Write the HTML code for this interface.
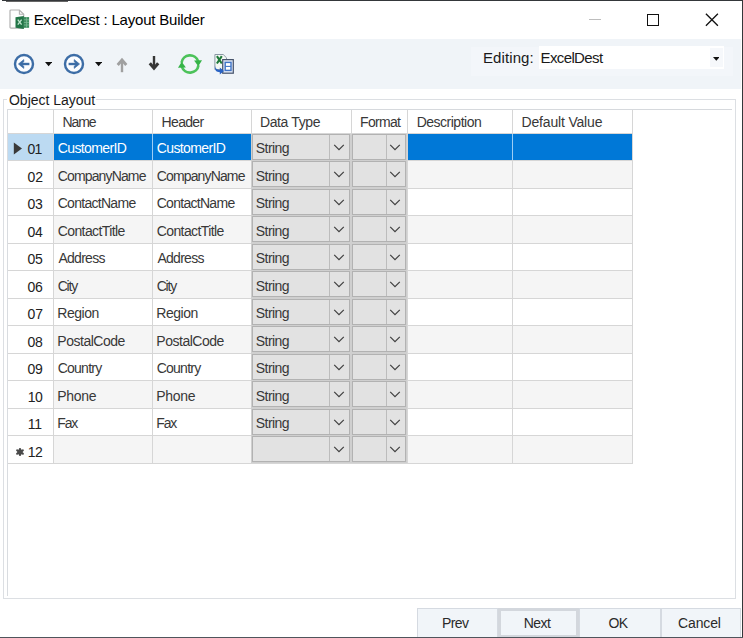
<!DOCTYPE html>
<html><head><meta charset="utf-8"><title>ExcelDest : Layout Builder</title>
<style>
html,body{margin:0;padding:0;}
body{width:743px;height:638px;overflow:hidden;background:#fff;position:relative;font-family:"Liberation Sans",sans-serif;font-size:13px;color:#1a1a1a;}
.a{position:absolute;}
.t{position:absolute;white-space:pre;}
.hl{position:absolute;height:1px;background:#d6d6d6;}
.vl{position:absolute;width:1px;background:#d6d6d6;}
.cb{position:absolute;background:#e2e2e2;border:1.2px solid #b2b2b2;box-sizing:border-box;}
.cb i{position:absolute;top:0;bottom:0;width:1.3px;background:#bcbcbc;}
.btn{position:absolute;box-sizing:border-box;background:#f1f5f9;border:1px solid #d5dae1;}
</style></head><body>

<div class="a" style="z-index:5;left:2px;top:0;width:741px;height:1px;background:#34373a"></div>
<div class="a" style="z-index:5;left:742px;top:0;width:1px;height:638px;background:#34373a"></div>
<div class="a" style="z-index:5;left:0;top:637px;width:743px;height:1px;background:#50555c"></div>
<div class="a" style="left:6px;top:0;width:62px;height:1.5px;background:#333;opacity:.75"></div>
<svg class="a" style="left:9px;top:9px" width="22" height="22" viewBox="0 0 22 22">
<path d="M2 1h8.4l4.3 4.3v12.8q0 1 -1 1h-11.7q-1 0 -1 -1v-16.1q0 -1 1 -1z" fill="#fdfdfd" stroke="#b2b2b2" stroke-width="1.2"/>
<path d="M10.4 1v4.3h4.3" fill="none" stroke="#b2b2b2" stroke-width="1.1"/>
<path d="M6.5 8.2L14.9 7v12.9L6.5 18.7z" fill="#227547"/>
<rect x="14.9" y="8.1" width="5.2" height="10.7" fill="#3b8c5d"/>
<path d="M14.9 10.8h5.2M14.9 13.4h5.2M14.9 16h5.2M17.6 8.1v10.7" stroke="#7fbb98" stroke-width="0.8"/>
<path d="M8.8 10.7l3.8 5M12.6 10.7l-3.8 5" stroke="#bfe3cc" stroke-width="1.4"/>
</svg>
<div class="t" style="left:33.80px;top:9.40px;font-size:15px;line-height:21px;height:21px;letter-spacing:-0.200px;color:#000;">ExcelDest : Layout Builder</div>
<div class="a" style="left:589.3px;top:19px;width:12px;height:1px;background:#bdbdbd"></div>
<div class="a" style="left:646.8px;top:13.6px;width:12.2px;height:12.2px;box-sizing:border-box;border:1.3px solid #111"></div>
<svg class="a" style="left:704px;top:12px" width="16" height="16" viewBox="0 0 16 16"><path d="M1.9 1.7L13.9 13.7M13.9 1.7L1.9 13.7" stroke="#111" stroke-width="1.3" fill="none"/></svg>
<div class="a" style="left:0;top:38.8px;width:740.6px;height:50px;background:#f0f4f8"></div>
<div class="a" style="left:471px;top:46.5px;width:262px;height:29px;background:#f3f6fa"></div>
<svg class="a" style="left:11.7px;top:52.0px" width="24" height="24" viewBox="-12 -12 24 24"><circle r="9" fill="#fcfdff" stroke="#3d6da6" stroke-width="2.4"/><path d="M5.4 0H-3.6" fill="none" stroke="#3d6da6" stroke-width="2.4"/><path d="M-0.2 -4.4L-5.6 0L-0.2 4.4L-0.2 2.2L-2.6 0L-0.2 -2.2Z" fill="#3d6da6" stroke="#3d6da6" stroke-width="0.6"/></svg>
<svg class="a" style="left:62.400000000000006px;top:52.0px" width="24" height="24" viewBox="-12 -12 24 24"><circle r="9" fill="#fcfdff" stroke="#3d6da6" stroke-width="2.4"/><path d="M-5.4 0H3.6" fill="none" stroke="#3d6da6" stroke-width="2.4"/><path d="M0.2 -4.4L5.6 0L0.2 4.4L0.2 2.2L2.6 0L0.2 -2.2Z" fill="#3d6da6" stroke="#3d6da6" stroke-width="0.6"/></svg>
<svg class="a" style="left:44.9px;top:62.449999999999996px" width="7.2" height="4.3" viewBox="0 0 7.2 4.3"><path d="M0 0H7.2L3.6 4.3Z" fill="#111"/></svg>
<svg class="a" style="left:94.9px;top:62.449999999999996px" width="7.2" height="4.3" viewBox="0 0 7.2 4.3"><path d="M0 0H7.2L3.6 4.3Z" fill="#111"/></svg>
<svg class="a" style="left:113.5px;top:56.7px" width="16" height="16" viewBox="0 0 16 16"><path d="M8 15.2V3.4" fill="none" stroke="#a0a0a0" stroke-width="2.4"/><path d="M3.7 8L8 3L12.3 8" fill="none" stroke="#a0a0a0" stroke-width="2.9"/></svg>
<svg class="a" style="left:146px;top:55.1px" width="16" height="16" viewBox="0 0 16 16"><path d="M8 1V12.8" fill="none" stroke="#363636" stroke-width="2.4"/><path d="M3.8 8.2L8 13.2L12.2 8.2" fill="none" stroke="#363636" stroke-width="3"/></svg>
<svg class="a" style="left:177.9px;top:51.7px" width="24" height="24" viewBox="-12 -12 24 24">
<path d="M-8.5 -1.2A8.6 8.6 0 0 1 8.2 -2.6" fill="none" stroke="#4cc25a" stroke-width="2.7"/>
<path d="M8.5 1.2A8.6 8.6 0 0 1 -8.2 2.6" fill="none" stroke="#4cc25a" stroke-width="2.7"/>
<path d="M4.1 -3.4L12 -3.8L8.3 2.2Z" fill="#35b347"/>
<path d="M-4.1 3.4L-12 3.8L-8.3 -2.2Z" fill="#35b347"/>
</svg>
<svg class="a" style="left:214px;top:54px" width="22" height="21" viewBox="0 0 22 21">
<path d="M0.9 0.5h8.3l3.3 3.3v11.7h-11.6z" fill="#f4f8f4" stroke="#8a97a5" stroke-width="1"/>
<path d="M2.9 2.1l4.9 7.4M7.8 2.1l-4.9 7.4" stroke="#1f7a3a" stroke-width="2.1"/>
<rect x="8.7" y="5.6" width="10.6" height="13.6" fill="#dde6f5" stroke="#46536b" stroke-width="1.2"/>
<rect x="11.2" y="8.4" width="5.8" height="8" fill="#fff" stroke="#3f74c7" stroke-width="1.4"/>
<path d="M11.2 12.4h5.8" stroke="#3f74c7" stroke-width="1.1"/>
<path d="M0.9 11.5q0.4 4.4 4.9 4.4v-2.3l4.2 3.5l-4.2 3.3v-2.2q-5.6 0 -4.9 -6.7z" fill="#2a63c4"/>
</svg>
<div class="t" style="left:483.00px;top:46.90px;font-size:15px;line-height:21px;height:21px;letter-spacing:0.100px;color:#1a1a1a;">Editing:</div>
<div class="a" style="left:539px;top:46.4px;width:185.3px;height:22.2px;background:#fff"></div>
<div class="a" style="left:709.5px;top:48.4px;width:13.5px;height:18.4px;background:#f6f8fb"></div>
<div class="t" style="left:540.50px;top:46.90px;font-size:15px;line-height:21px;height:21px;letter-spacing:-0.612px;color:#1a1a1a;">ExcelDest</div>
<svg class="a" style="left:712.7px;top:56.800000000000004px" width="6.6" height="3.8" viewBox="0 0 6.6 3.8"><path d="M0 0H6.6L3.3 3.8Z" fill="#111"/></svg>
<div class="a" style="left:3.3px;top:99.2px;width:732.4px;height:499.8px;box-sizing:border-box;border:1px solid #dcdfe3;box-shadow:inset 1px 1px 0 #fff, 1px 1px 0 #fff"></div>
<div class="a" style="left:7px;top:96px;width:89px;height:8px;background:#fff"></div>
<div class="t" style="left:9.00px;top:90.35px;font-size:14px;line-height:20px;height:20px;letter-spacing:-0.017px;color:#1a1a1a;">Object Layout</div>
<div class="a" style="left:7.0px;top:109.0px;width:725px;height:1.2px;background:#d6d9dd"></div>
<div class="a" style="left:6.6px;top:109.0px;width:1.5px;height:486.6px;background:#d9dce0"></div>
<div class="a" style="left:8.0px;top:133.5px;width:45.0px;height:26.7px;background:#bcdaf2"></div>
<div class="a" style="left:53px;top:133.5px;width:198.3px;height:26.7px;background:#0078d7"></div>
<div class="a" style="left:407.2px;top:133.5px;width:225.3px;height:26.7px;background:#0078d7"></div>
<div class="a" style="left:53px;top:161.0px;width:579.5px;height:27.5px;background:#f5f5f5"></div>
<div class="a" style="left:53px;top:216.0px;width:579.5px;height:27.5px;background:#f5f5f5"></div>
<div class="a" style="left:53px;top:271.0px;width:579.5px;height:27.5px;background:#f5f5f5"></div>
<div class="a" style="left:53px;top:326.0px;width:579.5px;height:27.5px;background:#f5f5f5"></div>
<div class="a" style="left:53px;top:381.0px;width:579.5px;height:27.5px;background:#f5f5f5"></div>
<div class="a" style="left:53px;top:436.0px;width:579.5px;height:27.5px;background:#f5f5f5"></div>
<div class="hl" style="left:8.0px;top:132.7px;width:625.0px"></div>
<div class="hl" style="left:8.0px;top:160.2px;width:625.0px"></div>
<div class="hl" style="left:8.0px;top:187.7px;width:625.0px"></div>
<div class="hl" style="left:8.0px;top:215.2px;width:625.0px"></div>
<div class="hl" style="left:8.0px;top:242.7px;width:625.0px"></div>
<div class="hl" style="left:8.0px;top:270.2px;width:625.0px"></div>
<div class="hl" style="left:8.0px;top:297.7px;width:625.0px"></div>
<div class="hl" style="left:8.0px;top:325.2px;width:625.0px"></div>
<div class="hl" style="left:8.0px;top:352.7px;width:625.0px"></div>
<div class="hl" style="left:8.0px;top:380.2px;width:625.0px"></div>
<div class="hl" style="left:8.0px;top:407.7px;width:625.0px"></div>
<div class="hl" style="left:8.0px;top:435.2px;width:625.0px"></div>
<div class="hl" style="left:8.0px;top:462.7px;width:625.0px"></div>
<div class="vl" style="left:52.5px;top:110.0px;height:353.5px"></div>
<div class="vl" style="left:151.8px;top:110.0px;height:353.5px"></div>
<div class="vl" style="left:250.8px;top:110.0px;height:353.5px"></div>
<div class="vl" style="left:350.8px;top:110.0px;height:353.5px"></div>
<div class="vl" style="left:406.7px;top:110.0px;height:353.5px"></div>
<div class="vl" style="left:511.9px;top:110.0px;height:353.5px"></div>
<div class="vl" style="left:632.0px;top:110.0px;height:353.5px"></div>
<div class="a" style="left:251.3px;top:133.5px;width:155.29999999999998px;height:329.4px;background:#cfcfcf"></div>
<div class="a" style="left:151.8px;top:133.5px;width:1px;height:26.7px;background:#9ccdf5"></div>
<div class="a" style="left:511.9px;top:133.5px;width:1px;height:26.7px;background:#9ccdf5"></div>
<div class="t" style="left:62.60px;top:111.65px;font-size:14px;line-height:20px;height:20px;letter-spacing:-1.167px;color:#383838;">Name</div>
<div class="t" style="left:161.60px;top:111.65px;font-size:14px;line-height:20px;height:20px;letter-spacing:-0.680px;color:#383838;">Header</div>
<div class="t" style="left:259.90px;top:111.65px;font-size:14px;line-height:20px;height:20px;letter-spacing:-0.362px;color:#383838;">Data Type</div>
<div class="t" style="left:360.10px;top:111.65px;font-size:14px;line-height:20px;height:20px;letter-spacing:-0.700px;color:#383838;">Format</div>
<div class="t" style="left:416.70px;top:111.65px;font-size:14px;line-height:20px;height:20px;letter-spacing:-0.500px;color:#383838;">Description</div>
<div class="t" style="left:521.60px;top:111.65px;font-size:14px;line-height:20px;height:20px;letter-spacing:-0.183px;color:#383838;">Default Value</div>
<div class="t" style="left:27.50px;top:139.15px;font-size:14px;line-height:20px;height:20px;letter-spacing:-0.900px;color:#222;">01</div>
<div class="t" style="left:57.70px;top:138.35px;font-size:14px;line-height:20px;height:20px;letter-spacing:-0.600px;color:#fff;">CustomerID</div>
<div class="t" style="left:156.70px;top:138.35px;font-size:14px;line-height:20px;height:20px;letter-spacing:-0.600px;color:#fff;">CustomerID</div>
<div class="cb" style="left:251.5px;top:133.8px;width:98.4px;height:25.9px"><i style="right:18.6px"></i></div>
<div class="cb" style="left:352.1px;top:133.8px;width:54.299999999999976px;height:25.9px"><i style="right:18.6px"></i></div>
<svg class="a" style="left:333.40000000000003px;top:142.5px" width="12" height="9" viewBox="0 0 12 9"><path d="M1.2 1.8L6 6.6L10.8 1.8" fill="none" stroke="#404040" stroke-width="1.2"/></svg>
<svg class="a" style="left:389.3px;top:142.5px" width="12" height="9" viewBox="0 0 12 9"><path d="M1.2 1.8L6 6.6L10.8 1.8" fill="none" stroke="#404040" stroke-width="1.2"/></svg>
<div class="t" style="left:255.80px;top:138.35px;font-size:14px;line-height:20px;height:20px;letter-spacing:-0.560px;color:#383838;">String</div>
<div class="t" style="left:27.50px;top:166.65px;font-size:14px;line-height:20px;height:20px;letter-spacing:-0.100px;color:#222;">02</div>
<div class="t" style="left:57.70px;top:165.85px;font-size:14px;line-height:20px;height:20px;letter-spacing:-0.850px;color:#383838;">CompanyName</div>
<div class="t" style="left:156.70px;top:165.85px;font-size:14px;line-height:20px;height:20px;letter-spacing:-0.850px;color:#383838;">CompanyName</div>
<div class="cb" style="left:251.5px;top:161.3px;width:98.4px;height:25.9px"><i style="right:18.6px"></i></div>
<div class="cb" style="left:352.1px;top:161.3px;width:54.299999999999976px;height:25.9px"><i style="right:18.6px"></i></div>
<svg class="a" style="left:333.40000000000003px;top:170.0px" width="12" height="9" viewBox="0 0 12 9"><path d="M1.2 1.8L6 6.6L10.8 1.8" fill="none" stroke="#404040" stroke-width="1.2"/></svg>
<svg class="a" style="left:389.3px;top:170.0px" width="12" height="9" viewBox="0 0 12 9"><path d="M1.2 1.8L6 6.6L10.8 1.8" fill="none" stroke="#404040" stroke-width="1.2"/></svg>
<div class="t" style="left:255.80px;top:165.85px;font-size:14px;line-height:20px;height:20px;letter-spacing:-0.560px;color:#383838;">String</div>
<div class="t" style="left:27.50px;top:194.15px;font-size:14px;line-height:20px;height:20px;letter-spacing:-0.200px;color:#222;">03</div>
<div class="t" style="left:57.70px;top:193.35px;font-size:14px;line-height:20px;height:20px;letter-spacing:-0.710px;color:#383838;">ContactName</div>
<div class="t" style="left:156.70px;top:193.35px;font-size:14px;line-height:20px;height:20px;letter-spacing:-0.710px;color:#383838;">ContactName</div>
<div class="cb" style="left:251.5px;top:188.8px;width:98.4px;height:25.9px"><i style="right:18.6px"></i></div>
<div class="cb" style="left:352.1px;top:188.8px;width:54.299999999999976px;height:25.9px"><i style="right:18.6px"></i></div>
<svg class="a" style="left:333.40000000000003px;top:197.5px" width="12" height="9" viewBox="0 0 12 9"><path d="M1.2 1.8L6 6.6L10.8 1.8" fill="none" stroke="#404040" stroke-width="1.2"/></svg>
<svg class="a" style="left:389.3px;top:197.5px" width="12" height="9" viewBox="0 0 12 9"><path d="M1.2 1.8L6 6.6L10.8 1.8" fill="none" stroke="#404040" stroke-width="1.2"/></svg>
<div class="t" style="left:255.80px;top:193.35px;font-size:14px;line-height:20px;height:20px;letter-spacing:-0.560px;color:#383838;">String</div>
<div class="t" style="left:27.50px;top:221.65px;font-size:14px;line-height:20px;height:20px;letter-spacing:-0.400px;color:#222;">04</div>
<div class="t" style="left:57.70px;top:220.85px;font-size:14px;line-height:20px;height:20px;letter-spacing:-0.591px;color:#383838;">ContactTitle</div>
<div class="t" style="left:156.70px;top:220.85px;font-size:14px;line-height:20px;height:20px;letter-spacing:-0.591px;color:#383838;">ContactTitle</div>
<div class="cb" style="left:251.5px;top:216.3px;width:98.4px;height:25.9px"><i style="right:18.6px"></i></div>
<div class="cb" style="left:352.1px;top:216.3px;width:54.299999999999976px;height:25.9px"><i style="right:18.6px"></i></div>
<svg class="a" style="left:333.40000000000003px;top:225.0px" width="12" height="9" viewBox="0 0 12 9"><path d="M1.2 1.8L6 6.6L10.8 1.8" fill="none" stroke="#404040" stroke-width="1.2"/></svg>
<svg class="a" style="left:389.3px;top:225.0px" width="12" height="9" viewBox="0 0 12 9"><path d="M1.2 1.8L6 6.6L10.8 1.8" fill="none" stroke="#404040" stroke-width="1.2"/></svg>
<div class="t" style="left:255.80px;top:220.85px;font-size:14px;line-height:20px;height:20px;letter-spacing:-0.560px;color:#383838;">String</div>
<div class="t" style="left:27.50px;top:249.15px;font-size:14px;line-height:20px;height:20px;letter-spacing:-0.200px;color:#222;">05</div>
<div class="t" style="left:58.40px;top:248.35px;font-size:14px;line-height:20px;height:20px;letter-spacing:-0.717px;color:#383838;">Address</div>
<div class="t" style="left:157.40px;top:248.35px;font-size:14px;line-height:20px;height:20px;letter-spacing:-0.717px;color:#383838;">Address</div>
<div class="cb" style="left:251.5px;top:243.8px;width:98.4px;height:25.9px"><i style="right:18.6px"></i></div>
<div class="cb" style="left:352.1px;top:243.8px;width:54.299999999999976px;height:25.9px"><i style="right:18.6px"></i></div>
<svg class="a" style="left:333.40000000000003px;top:252.5px" width="12" height="9" viewBox="0 0 12 9"><path d="M1.2 1.8L6 6.6L10.8 1.8" fill="none" stroke="#404040" stroke-width="1.2"/></svg>
<svg class="a" style="left:389.3px;top:252.5px" width="12" height="9" viewBox="0 0 12 9"><path d="M1.2 1.8L6 6.6L10.8 1.8" fill="none" stroke="#404040" stroke-width="1.2"/></svg>
<div class="t" style="left:255.80px;top:248.35px;font-size:14px;line-height:20px;height:20px;letter-spacing:-0.560px;color:#383838;">String</div>
<div class="t" style="left:27.50px;top:276.65px;font-size:14px;line-height:20px;height:20px;letter-spacing:-0.200px;color:#222;">06</div>
<div class="t" style="left:57.70px;top:275.85px;font-size:14px;line-height:20px;height:20px;letter-spacing:-1.200px;color:#383838;">City</div>
<div class="t" style="left:156.70px;top:275.85px;font-size:14px;line-height:20px;height:20px;letter-spacing:-1.200px;color:#383838;">City</div>
<div class="cb" style="left:251.5px;top:271.3px;width:98.4px;height:25.9px"><i style="right:18.6px"></i></div>
<div class="cb" style="left:352.1px;top:271.3px;width:54.299999999999976px;height:25.9px"><i style="right:18.6px"></i></div>
<svg class="a" style="left:333.40000000000003px;top:280.0px" width="12" height="9" viewBox="0 0 12 9"><path d="M1.2 1.8L6 6.6L10.8 1.8" fill="none" stroke="#404040" stroke-width="1.2"/></svg>
<svg class="a" style="left:389.3px;top:280.0px" width="12" height="9" viewBox="0 0 12 9"><path d="M1.2 1.8L6 6.6L10.8 1.8" fill="none" stroke="#404040" stroke-width="1.2"/></svg>
<div class="t" style="left:255.80px;top:275.85px;font-size:14px;line-height:20px;height:20px;letter-spacing:-0.560px;color:#383838;">String</div>
<div class="t" style="left:27.50px;top:304.15px;font-size:14px;line-height:20px;height:20px;letter-spacing:-0.100px;color:#222;">07</div>
<div class="t" style="left:57.30px;top:303.35px;font-size:14px;line-height:20px;height:20px;letter-spacing:-0.460px;color:#383838;">Region</div>
<div class="t" style="left:156.30px;top:303.35px;font-size:14px;line-height:20px;height:20px;letter-spacing:-0.460px;color:#383838;">Region</div>
<div class="cb" style="left:251.5px;top:298.8px;width:98.4px;height:25.9px"><i style="right:18.6px"></i></div>
<div class="cb" style="left:352.1px;top:298.8px;width:54.299999999999976px;height:25.9px"><i style="right:18.6px"></i></div>
<svg class="a" style="left:333.40000000000003px;top:307.5px" width="12" height="9" viewBox="0 0 12 9"><path d="M1.2 1.8L6 6.6L10.8 1.8" fill="none" stroke="#404040" stroke-width="1.2"/></svg>
<svg class="a" style="left:389.3px;top:307.5px" width="12" height="9" viewBox="0 0 12 9"><path d="M1.2 1.8L6 6.6L10.8 1.8" fill="none" stroke="#404040" stroke-width="1.2"/></svg>
<div class="t" style="left:255.80px;top:303.35px;font-size:14px;line-height:20px;height:20px;letter-spacing:-0.560px;color:#383838;">String</div>
<div class="t" style="left:27.50px;top:331.65px;font-size:14px;line-height:20px;height:20px;letter-spacing:-0.200px;color:#222;">08</div>
<div class="t" style="left:57.30px;top:330.85px;font-size:14px;line-height:20px;height:20px;letter-spacing:-0.478px;color:#383838;">PostalCode</div>
<div class="t" style="left:156.30px;top:330.85px;font-size:14px;line-height:20px;height:20px;letter-spacing:-0.478px;color:#383838;">PostalCode</div>
<div class="cb" style="left:251.5px;top:326.3px;width:98.4px;height:25.9px"><i style="right:18.6px"></i></div>
<div class="cb" style="left:352.1px;top:326.3px;width:54.299999999999976px;height:25.9px"><i style="right:18.6px"></i></div>
<svg class="a" style="left:333.40000000000003px;top:335.0px" width="12" height="9" viewBox="0 0 12 9"><path d="M1.2 1.8L6 6.6L10.8 1.8" fill="none" stroke="#404040" stroke-width="1.2"/></svg>
<svg class="a" style="left:389.3px;top:335.0px" width="12" height="9" viewBox="0 0 12 9"><path d="M1.2 1.8L6 6.6L10.8 1.8" fill="none" stroke="#404040" stroke-width="1.2"/></svg>
<div class="t" style="left:255.80px;top:330.85px;font-size:14px;line-height:20px;height:20px;letter-spacing:-0.560px;color:#383838;">String</div>
<div class="t" style="left:27.50px;top:359.15px;font-size:14px;line-height:20px;height:20px;letter-spacing:-0.200px;color:#222;">09</div>
<div class="t" style="left:57.70px;top:358.35px;font-size:14px;line-height:20px;height:20px;letter-spacing:-0.750px;color:#383838;">Country</div>
<div class="t" style="left:156.70px;top:358.35px;font-size:14px;line-height:20px;height:20px;letter-spacing:-0.750px;color:#383838;">Country</div>
<div class="cb" style="left:251.5px;top:353.8px;width:98.4px;height:25.9px"><i style="right:18.6px"></i></div>
<div class="cb" style="left:352.1px;top:353.8px;width:54.299999999999976px;height:25.9px"><i style="right:18.6px"></i></div>
<svg class="a" style="left:333.40000000000003px;top:362.5px" width="12" height="9" viewBox="0 0 12 9"><path d="M1.2 1.8L6 6.6L10.8 1.8" fill="none" stroke="#404040" stroke-width="1.2"/></svg>
<svg class="a" style="left:389.3px;top:362.5px" width="12" height="9" viewBox="0 0 12 9"><path d="M1.2 1.8L6 6.6L10.8 1.8" fill="none" stroke="#404040" stroke-width="1.2"/></svg>
<div class="t" style="left:255.80px;top:358.35px;font-size:14px;line-height:20px;height:20px;letter-spacing:-0.560px;color:#383838;">String</div>
<div class="t" style="left:27.80px;top:386.65px;font-size:14px;line-height:20px;height:20px;letter-spacing:-0.700px;color:#222;">10</div>
<div class="t" style="left:57.30px;top:385.85px;font-size:14px;line-height:20px;height:20px;letter-spacing:-0.300px;color:#383838;">Phone</div>
<div class="t" style="left:156.30px;top:385.85px;font-size:14px;line-height:20px;height:20px;letter-spacing:-0.300px;color:#383838;">Phone</div>
<div class="cb" style="left:251.5px;top:381.3px;width:98.4px;height:25.9px"><i style="right:18.6px"></i></div>
<div class="cb" style="left:352.1px;top:381.3px;width:54.299999999999976px;height:25.9px"><i style="right:18.6px"></i></div>
<svg class="a" style="left:333.40000000000003px;top:390.0px" width="12" height="9" viewBox="0 0 12 9"><path d="M1.2 1.8L6 6.6L10.8 1.8" fill="none" stroke="#404040" stroke-width="1.2"/></svg>
<svg class="a" style="left:389.3px;top:390.0px" width="12" height="9" viewBox="0 0 12 9"><path d="M1.2 1.8L6 6.6L10.8 1.8" fill="none" stroke="#404040" stroke-width="1.2"/></svg>
<div class="t" style="left:255.80px;top:385.85px;font-size:14px;line-height:20px;height:20px;letter-spacing:-0.560px;color:#383838;">String</div>
<div class="t" style="left:27.80px;top:414.15px;font-size:14px;line-height:20px;height:20px;letter-spacing:-0.300px;color:#222;">11</div>
<div class="t" style="left:57.30px;top:413.35px;font-size:14px;line-height:20px;height:20px;letter-spacing:-1.150px;color:#383838;">Fax</div>
<div class="t" style="left:156.30px;top:413.35px;font-size:14px;line-height:20px;height:20px;letter-spacing:-1.150px;color:#383838;">Fax</div>
<div class="cb" style="left:251.5px;top:408.8px;width:98.4px;height:25.9px"><i style="right:18.6px"></i></div>
<div class="cb" style="left:352.1px;top:408.8px;width:54.299999999999976px;height:25.9px"><i style="right:18.6px"></i></div>
<svg class="a" style="left:333.40000000000003px;top:417.5px" width="12" height="9" viewBox="0 0 12 9"><path d="M1.2 1.8L6 6.6L10.8 1.8" fill="none" stroke="#404040" stroke-width="1.2"/></svg>
<svg class="a" style="left:389.3px;top:417.5px" width="12" height="9" viewBox="0 0 12 9"><path d="M1.2 1.8L6 6.6L10.8 1.8" fill="none" stroke="#404040" stroke-width="1.2"/></svg>
<div class="t" style="left:255.80px;top:413.35px;font-size:14px;line-height:20px;height:20px;letter-spacing:-0.560px;color:#383838;">String</div>
<div class="t" style="left:27.80px;top:441.65px;font-size:14px;line-height:20px;height:20px;letter-spacing:-0.500px;color:#222;">12</div>
<div class="cb" style="left:251.5px;top:436.3px;width:98.4px;height:25.9px"><i style="right:18.6px"></i></div>
<div class="cb" style="left:352.1px;top:436.3px;width:54.299999999999976px;height:25.9px"><i style="right:18.6px"></i></div>
<svg class="a" style="left:333.40000000000003px;top:445.0px" width="12" height="9" viewBox="0 0 12 9"><path d="M1.2 1.8L6 6.6L10.8 1.8" fill="none" stroke="#404040" stroke-width="1.2"/></svg>
<svg class="a" style="left:389.3px;top:445.0px" width="12" height="9" viewBox="0 0 12 9"><path d="M1.2 1.8L6 6.6L10.8 1.8" fill="none" stroke="#404040" stroke-width="1.2"/></svg>
<svg class="a" style="left:13px;top:141.9px" width="10" height="13" viewBox="0 0 10 13"><path d="M0.8 0.6L9 6.5L0.8 12.4Z" fill="#3a3a3a"/></svg>
<svg class="a" style="left:15.2px;top:446.9px" width="10" height="10" viewBox="-5 -5 10 10"><circle r="2.7" fill="#4a4a4a"/><path d="M0 -2.9V2.9M-2.8 -1.6L2.8 1.6M-2.8 1.6L2.8 -1.6" stroke="#4a4a4a" stroke-width="2.2" stroke-linecap="round"/></svg>
<div class="btn" style="left:417px;top:608.3px;width:80.5px;height:30px;"></div>
<div class="t" style="left:441.90px;top:612.65px;font-size:14px;line-height:20px;height:20px;letter-spacing:-0.600px;color:#2a2a2a;">Prev</div>
<div class="btn" style="left:497.5px;top:608.3px;width:81.5px;height:30px;border:3px solid #d3d7dd;"></div>
<div class="t" style="left:523.80px;top:612.65px;font-size:14px;line-height:20px;height:20px;letter-spacing:-0.567px;color:#2a2a2a;">Next</div>
<div class="btn" style="left:579px;top:608.3px;width:81.6px;height:30px;"></div>
<div class="t" style="left:608.40px;top:612.65px;font-size:14px;line-height:20px;height:20px;letter-spacing:-0.500px;color:#2a2a2a;">OK</div>
<div class="btn" style="left:660.6px;top:608.3px;width:80.1px;height:30px;"></div>
<div class="t" style="left:678.10px;top:612.65px;font-size:14px;line-height:20px;height:20px;letter-spacing:-0.160px;color:#2a2a2a;">Cancel</div>
</body></html>
